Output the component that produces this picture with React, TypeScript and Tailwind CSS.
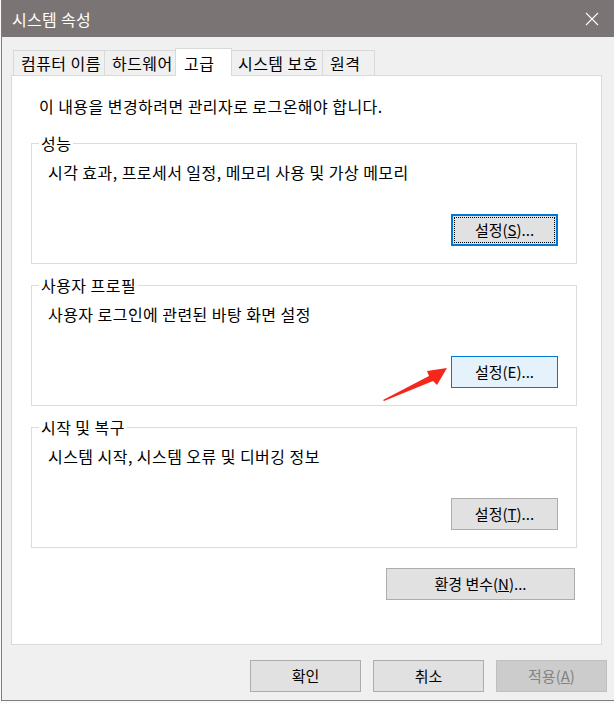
import React from "react";

const font = "font-['Malgun_Gothic','Noto_Sans_CJK_KR',sans-serif]";
const txt = "text-[16px] leading-[18px] tracking-[0.45px] text-black";

function Btn({
  children,
  w,
  variant = "normal",
}: {
  children: React.ReactNode;
  w: string;
  variant?: "normal" | "focus" | "hover" | "disabled";
}) {
  const base =
    "relative h-[32px] flex items-center justify-center text-[15px] leading-[18px] " + w;
  if (variant === "focus")
    return (
      <div className={base + " border-2 border-[#0078d7] bg-[#e1e1e1] text-black"}>
        <span className="absolute inset-[1px] border border-dotted border-black" />
        <span className="relative">{children}</span>
      </div>
    );
  if (variant === "hover")
    return <div className={base + " border border-[#0078d7] bg-[#e5f1fb] text-black"}>{children}</div>;
  if (variant === "disabled")
    return <div className={base + " border border-[#bfbfbf] bg-[#cccccc] text-[#838383]"}>{children}</div>;
  return <div className={base + " border border-[#adadad] bg-[#e1e1e1] text-black"}>{children}</div>;
}

function Group({
  title,
  desc,
  button,
}: {
  title: string;
  desc: string;
  button: React.ReactNode;
}) {
  return (
    <div className="relative ml-[19px] w-[546px] h-[121px] border border-[#dcdcdc] flex flex-col">
      <span className={"absolute left-[7px] top-[-10px] bg-white px-[2px] " + txt}>{title}</span>
      <div className={"pl-[16px] pt-[19px] " + txt}>{desc}</div>
      <div className="flex justify-end pr-[18px] mt-[33px]">{button}</div>
    </div>
  );
}

const tabCls =
  "h-[25px] border-t border-l border-[#d9d9d9] bg-[#f0f0f0] pl-[7px] flex items-center whitespace-nowrap " +
  txt;

export default function App() {
  return (
    <div className={"relative w-[614px] h-[703px] overflow-hidden bg-[#fafafa] pl-[1px] " + font}>
      <div className="w-[640px] h-[701px] border-l border-b border-[#7d7d7d] bg-[#f0f0f0] flex flex-col">
        {/* Title bar */}
        <div className="h-[37px] bg-[#7a7574] flex items-center justify-between pl-[10px] pr-[40px]">
          <span className="text-white text-[16px] leading-[18px] tracking-[0.3px]">시스템 속성</span>
          <svg width="14" height="14" viewBox="0 0 14 14" className="mr-[2px]">
            <path d="M1 1 L13 13 M13 1 L1 13" stroke="#ffffff" strokeWidth="1.1" />
          </svg>
        </div>

        {/* Body */}
        <div className="pt-[11px] flex flex-col">
          {/* Tabs */}
          <div className="flex items-end h-[27px] pl-[11px]">
            <div className={tabCls + " w-[91px]"}>컴퓨터 이름</div>
            <div className={tabCls + " w-[73px]"}>하드웨어</div>
            <div
              className={
                "relative z-10 -mx-[2px] mb-[-1px] w-[57px] h-[28px] border-t border-l border-r border-[#d9d9d9] bg-white pl-[8px] flex items-center " +
                txt
              }
            >
              고급
            </div>
            <div className={tabCls + " w-[92px]"}>시스템 보호</div>
            <div className={tabCls + " w-[53px] border-r"}>원격</div>
          </div>

          {/* Panel */}
          <div className="ml-[9px] w-[591px] h-[570px] border border-[#d9d9d9] bg-white flex flex-col">
            <div className={"pl-[27px] pt-[21px] " + txt}>
              이 내용을 변경하려면 관리자로 로그온해야 합니다.
            </div>
            <div className="mt-[28px] flex flex-col gap-[21px]">
              <Group
                title="성능"
                desc="시각 효과, 프로세서 일정, 메모리 사용 및 가상 메모리"
                button={
                  <Btn w="w-[107px]" variant="focus">
                    설정(<u>S</u>)...
                  </Btn>
                }
              />
              <Group
                title="사용자 프로필"
                desc="사용자 로그인에 관련된 바탕 화면 설정"
                button={
                  <Btn w="w-[107px]" variant="hover">
                    설정(E)...
                  </Btn>
                }
              />
              <Group
                title="시작 및 복구"
                desc="시스템 시작, 시스템 오류 및 디버깅 정보"
                button={
                  <Btn w="w-[107px]">
                    설정(<u>T</u>)...
                  </Btn>
                }
              />
            </div>
            <div className="flex justify-end pr-[26px] mt-[20px]">
              <Btn w="w-[189px]">
                환경 변수(<u>N</u>)...
              </Btn>
            </div>
          </div>

          {/* Bottom buttons */}
          <div className="flex gap-[12px] ml-[248px] mt-[15px]">
            <Btn w="w-[111px]">확인</Btn>
            <Btn w="w-[111px]">취소</Btn>
            <Btn w="w-[111px]" variant="disabled">
              적용(<u>A</u>)
            </Btn>
          </div>
        </div>
      </div>

      {/* Red annotation arrow */}
      <svg
        className="absolute left-0 top-0 pointer-events-none"
        width="614"
        height="703"
        viewBox="0 0 614 703"
      >
        <polygon
          points="383,400 429,376 427,371 447,368 437,385 433,381 384,401"
          fill="#f5261c"
        />
      </svg>
    </div>
  );
}
